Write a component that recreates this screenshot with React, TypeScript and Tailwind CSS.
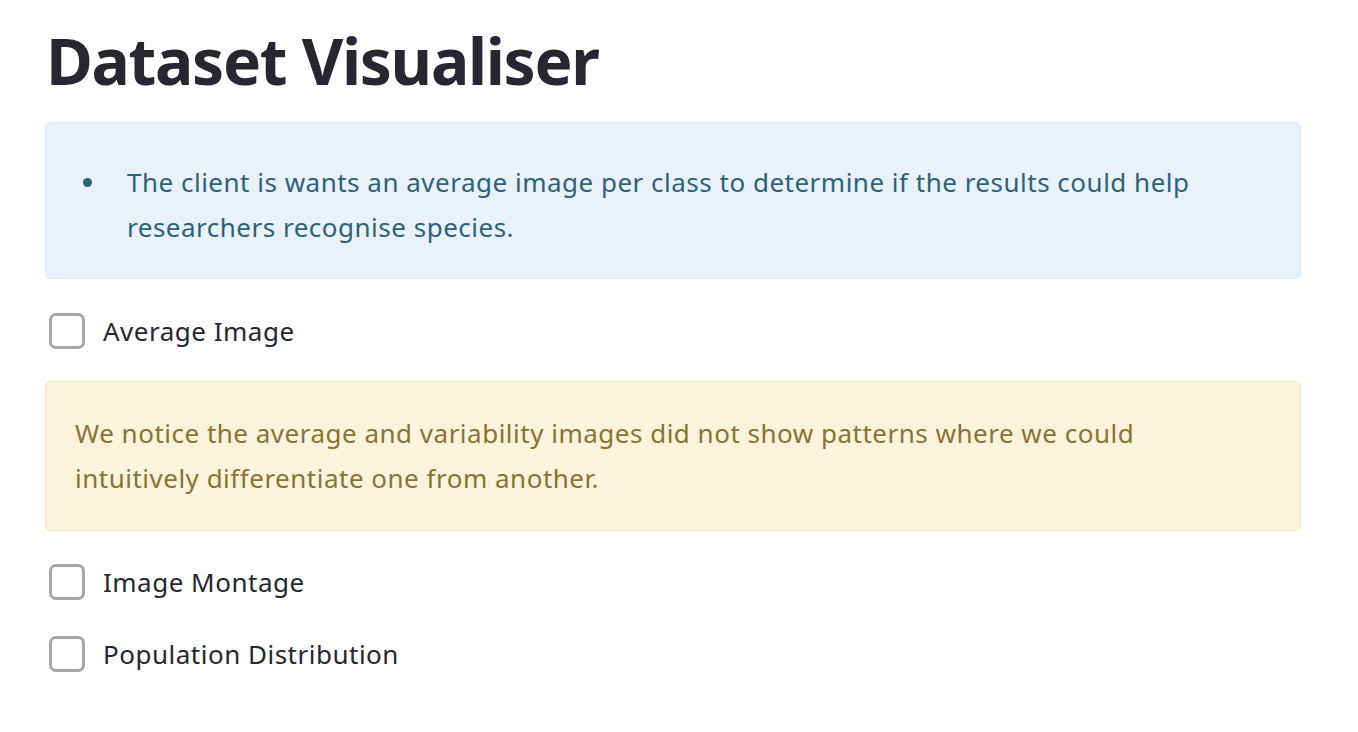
const font = { fontFamily: '"Noto Sans", "Open Sans", sans-serif' };

function Checkbox({ label }: { label: string }) {
  return (
    <label className="flex h-[36px] items-center gap-[18px] pl-[49px]">
      <span className="block size-[36px] shrink-0 rounded-[7px] border-[3px] border-[#a6a6ab] bg-white" />
      <span className="text-[26px] tracking-[0.5px] text-[#262730]">{label}</span>
    </label>
  );
}

export default function App() {
  return (
    <div className="min-h-[732px] w-[1358px] bg-white text-[#262730]" style={font}>
      <div className="flex flex-col">
        <h1 className="pl-[46px] pt-[21px] text-[64px] font-bold leading-[80px] tracking-[-1.3px] text-[#262730]">
          Dataset Visualiser
        </h1>

        {/* info box */}
        <div className="ml-[45px] mt-[21px] h-[157px] w-[1256px] rounded-[6px] border border-[#dbe7f7] bg-[#e9f1fb] pl-[37px] pr-[60px] pt-[37px] text-[26px] leading-[45px] tracking-[0.5px] text-[#2c6377]">
          <div className="flex">
            <span className="flex h-[45px] w-[44px] shrink-0 items-center">
              <span className="block size-[9px] rounded-full bg-[#2c6377]" />
            </span>
            <p>
              The client is wants an average image per class to determine if the results could help researchers
              recognise species.
            </p>
          </div>
        </div>

        <div className="mt-[34px]">
          <Checkbox label="Average Image" />
        </div>

        {/* warning box */}
        <div className="ml-[45px] mt-[32px] h-[150px] w-[1256px] rounded-[6px] border border-[#f5e6b8] bg-[#fcf3dc] pl-[29px] pt-[29px] text-[26px] leading-[45px] tracking-[0.5px] text-[#8a7431]">
          <p className="max-w-[1120px]">
            We notice the average and variability images did not show patterns where we could intuitively
            differentiate one from another.
          </p>
        </div>

        <div className="mt-[33px] flex flex-col gap-[36px]">
          <Checkbox label="Image Montage" />
          <Checkbox label="Population Distribution" />
        </div>
      </div>
    </div>
  );
}
